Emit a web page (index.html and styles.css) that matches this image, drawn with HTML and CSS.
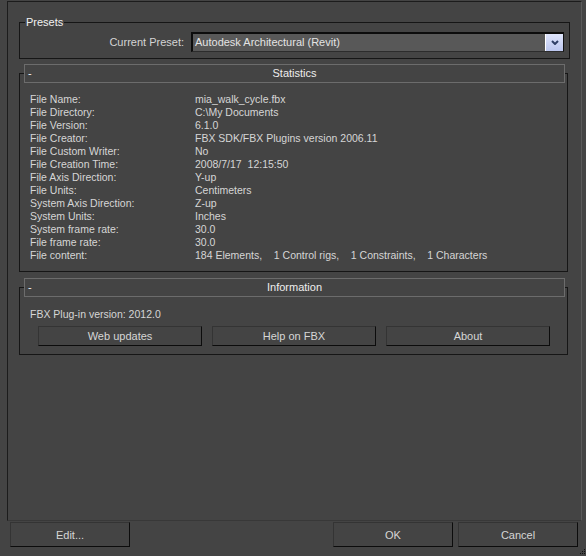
FILE: index.html
```html
<!DOCTYPE html>
<html>
<head>
<meta charset="utf-8">
<title>FBX Import</title>
<link rel="stylesheet" href="styles.css">
</head>
<body>
<div class="window">
  <div class="panel">
    <fieldset class="group presets">
      <legend class="group-title">Presets</legend>
      <div class="preset-row">
        <span class="preset-label">Current Preset:</span>
        <div class="combo">
          <span class="combo-text">Autodesk Architectural (Revit)</span>
          <span class="combo-btn"><svg class="chev" width="8" height="5" viewBox="0 0 8 5"><polyline points="1,1 4,4 7,1" fill="none" stroke="#2f3f66" stroke-width="2"/></svg></span>
        </div>
      </div>
    </fieldset>

    <fieldset class="group rollout stats">
      <legend class="rollout-head"><span class="toggle">-</span><span class="rollout-title">Statistics</span><span></span></legend>
      <dl class="stat-list">
        <div class="stat"><dt>File Name:</dt><dd>mia_walk_cycle.fbx</dd></div>
        <div class="stat"><dt>File Directory:</dt><dd>C:\My Documents</dd></div>
        <div class="stat"><dt>File Version:</dt><dd>6.1.0</dd></div>
        <div class="stat"><dt>File Creator:</dt><dd>FBX SDK/FBX Plugins version 2006.11</dd></div>
        <div class="stat"><dt>File Custom Writer:</dt><dd>No</dd></div>
        <div class="stat"><dt>File Creation Time:</dt><dd>2008/7/17  12:15:50</dd></div>
        <div class="stat"><dt>File Axis Direction:</dt><dd>Y-up</dd></div>
        <div class="stat"><dt>File Units:</dt><dd>Centimeters</dd></div>
        <div class="stat"><dt>System Axis Direction:</dt><dd>Z-up</dd></div>
        <div class="stat"><dt>System Units:</dt><dd>Inches</dd></div>
        <div class="stat"><dt>System frame rate:</dt><dd>30.0</dd></div>
        <div class="stat"><dt>File frame rate:</dt><dd>30.0</dd></div>
        <div class="stat"><dt>File content:</dt><dd>184 Elements,    1 Control rigs,    1 Constraints,    1 Characters</dd></div>
      </dl>
    </fieldset>

    <fieldset class="group rollout info">
      <legend class="rollout-head"><span class="toggle">-</span><span class="rollout-title">Information</span><span></span></legend>
      <div class="info-body">
        <p class="version">FBX Plug-in version: 2012.0</p>
        <div class="info-buttons">
          <button class="btn btn-info">Web updates</button>
          <button class="btn btn-info">Help on FBX</button>
          <button class="btn btn-info">About</button>
        </div>
      </div>
    </fieldset>
  </div>

  <div class="footer">
    <button class="btn btn-foot">Edit...</button>
    <div class="footer-right">
      <button class="btn btn-foot">OK</button>
      <button class="btn btn-foot">Cancel</button>
    </div>
  </div>

  <svg class="grip" width="6" height="6" viewBox="0 0 6 6">
    <rect x="4" y="0" width="1" height="1" fill="#111"/>
    <rect x="2" y="2" width="1" height="1" fill="#111"/>
    <rect x="4" y="2" width="1" height="1" fill="#111"/>
    <rect x="0" y="4" width="1" height="1" fill="#111"/>
    <rect x="2" y="4" width="1" height="1" fill="#111"/>
    <rect x="4" y="4" width="1" height="1" fill="#111"/>
  </svg>
</div>
</body>
</html>
```

FILE: styles.css
```css
html, body {
  margin: 0;
  padding: 0;
}

body {
  width: 586px;
  height: 556px;
  overflow: hidden;
  background: #444444;
  font-family: "Liberation Sans", Arial, sans-serif;
  font-size: 10.5px;
  line-height: 13px;
  color: #d6d6d6;
}

.window {
  position: relative;
  width: 586px;
  height: 556px;
  box-sizing: border-box;
  padding-top: 1px;
  display: flex;
  flex-direction: column;
}

.panel {
  margin-left: 7px;
  width: 575px;
  height: 520px;
  box-sizing: border-box;
  border: 1px solid;
  border-color: #1c1c1c #5a5a5a #383838 #1c1c1c;
  padding: 14px 11px 0 11px;
  display: flex;
  flex-direction: column;
}

/* group boxes */
.group {
  margin: 0;
  padding: 0;
  min-width: 0;
  border: 1px solid #161616;
}

.group-title {
  margin-left: 5px;
  padding: 0 1px;
  line-height: 13px;
  font-size: 11px;
  color: #f2f2f2;
}

.presets {
  padding: 3px 5px 6px 0;
}

.preset-row {
  display: flex;
  justify-content: flex-end;
  align-items: center;
  gap: 7px;
}

.preset-label {
  font-size: 11px;
  color: #d4d4d4;
}

.combo {
  width: 373px;
  height: 20px;
  box-sizing: border-box;
  border-style: solid;
  border-width: 2px 1px 1px 2px;
  border-color: #0c0c0c #111111 #2c2c2c #0c0c0c;
  background: #585858;
  display: flex;
  align-items: stretch;
}

.combo-text {
  flex: 1;
  padding-left: 2px;
  line-height: 17px;
  font-size: 11px;
  color: #e4e4e4;
}

.combo-btn {
  width: 17px;
  border-left: 1px solid #ffffff;
  background: linear-gradient(#dfe5fc, #bcc7ef);
  display: flex;
  align-items: center;
  justify-content: center;
}

.chev {
  display: block;
}

/* rollouts */
.rollout {
  margin-right: 2px;
}

.stats {
  margin-top: 5px;
}

.info {
  margin-top: 6px;
}

.rollout-head {
  margin-left: 4px;
  padding: 0;
  width: 541px;
  height: 19px;
  box-sizing: border-box;
  border: 1px solid #6c6c6c;
  background: #444444;
  display: grid;
  grid-template-columns: 1fr auto 1fr;
  align-items: center;
  line-height: 17px;
  font-size: 11px;
}

.toggle {
  padding-left: 3px;
  color: #f0f0f0;
}

.rollout-title {
  color: #eeeeee;
}

.stat-list {
  margin: 0;
  padding: 10px 0 9px 10px;
}

.stat {
  display: flex;
  height: 13px;
}

.stat dt {
  width: 165px;
  flex: none;
}

.stat dd {
  margin: 0;
  white-space: pre;
}

.info-body {
  padding: 11px 0 8px 10px;
}

.version {
  margin: 0;
}

.info-buttons {
  margin-top: 5px;
  margin-left: 8px;
  display: flex;
  gap: 10px;
}

/* buttons */
.btn {
  margin: 0;
  padding: 0;
  box-sizing: border-box;
  background: #444444;
  border: 1px solid;
  border-color: #343434 #0c0c0c #0c0c0c #343434;
  font-family: inherit;
  font-size: 11px;
  color: #d6d6d6;
}

.btn-info {
  width: 164px;
  height: 20px;
}

.footer {
  margin-top: 1px;
  padding: 0 8px 0 10px;
  display: flex;
  justify-content: space-between;
}

.footer-right {
  display: flex;
  gap: 5px;
}

.btn-foot {
  width: 120px;
  height: 25px;
}

.grip {
  position: absolute;
  right: 0;
  bottom: 1px;
}
```
